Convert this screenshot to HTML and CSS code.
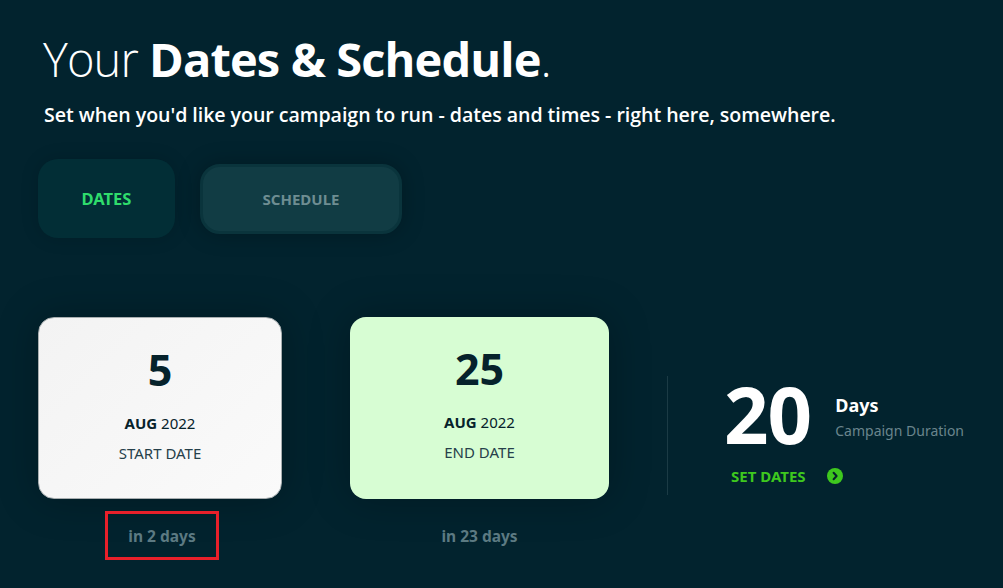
FILE: index.html
```html
<!DOCTYPE html>
<html lang="en">
<head>
  <meta charset="UTF-8" />
  <title>Dates &amp; Schedule</title>
  <link rel="stylesheet" href="styles.css">
</head>
<body>

  <!-- === Header === -->
  <header class="intro">
    <h1><span class="light">Your</span> Dates &amp; Schedule<span class="light">.</span></h1>
    <p>Set when you'd like your campaign to run - dates and times - right here, somewhere.</p>
  </header>

  <!-- === Tabs === -->
  <div class="tabs">
    <button class="tab active">DATES</button>
    <button class="tab">SCHEDULE</button>
  </div>

  <!-- === Date cards === -->
  <section class="dates">
    <div class="date-col">
      <div class="date-card start">
        <div class="day">5</div>
        <div class="month"><b>AUG</b> 2022</div>
        <div class="label">START DATE</div>
      </div>
      <div class="until highlight">in 2 days</div>
    </div>

    <div class="date-col">
      <div class="date-card end">
        <div class="day">25</div>
        <div class="month"><b>AUG</b> 2022</div>
        <div class="label">END DATE</div>
      </div>
      <div class="until">in 23 days</div>
    </div>

    <div class="divider"></div>

    <div class="summary">
      <div class="duration">
        <span class="count">20</span>
        <div class="unit">
          <strong>Days</strong>
          <span>Campaign Duration</span>
        </div>
      </div>
      <a href="#" class="set-dates">SET DATES
        <svg width="16" height="16" viewBox="0 0 16 16">
          <circle cx="8" cy="8" r="8" fill="#3ec81e"/>
          <path d="M6.6 4.8 L9.6 8 L6.6 11.2" fill="none" stroke="#06222b" stroke-width="2" stroke-linecap="round" stroke-linejoin="round"/>
        </svg>
      </a>
    </div>
  </section>

</body>
</html>
```

FILE: styles.css
```css
body {
  background: #02232e;
  color: #fff;
  font-family: 'Open Sans', 'Noto Sans', sans-serif;
  margin: 0;
  padding: 0;
  height: 588px;
  overflow: hidden;
}

/* === Header === */
.intro {
  padding: 25px 0 0 43px;
}

.intro h1 {
  margin: 0;
  font-size: 47px;
  font-weight: 700;
  line-height: 68px;
  letter-spacing: -0.9px;
}

.intro .light {
  font-weight: 300;
}

.intro p {
  margin: 8px 0 0 1px;
  font-size: 19.6px;
  font-weight: 600;
  line-height: 27px;
  letter-spacing: -0.05px;
}

/* === Tabs === */
.tabs {
  display: flex;
  align-items: center;
  gap: 25px;
  padding: 31px 0 0 38px;
}

.tab {
  font-family: 'Noto Sans', sans-serif;
  font-size: 15px;
  font-weight: 700;
  border: none;
  border-radius: 20px;
  cursor: pointer;
}

.tab.active {
  width: 137px;
  height: 79px;
  font-size: 16.5px;
  background: #022e36;
  color: #2fdc6c;
  box-shadow: 0 0 18px rgba(0, 0, 0, 0.15);
}

.tab:not(.active) {
  width: 202px;
  height: 70px;
  background: #113c44;
  color: #6e8d92;
  border: 3px solid #0a343c;
  box-shadow: 0 0 22px rgba(0, 0, 0, 0.25);
}

/* === Date cards === */
.dates {
  display: flex;
  align-items: flex-start;
  padding: 79px 0 0 38px;
  font-family: 'Noto Sans', sans-serif;
}

.date-col {
  display: flex;
  flex-direction: column;
  align-items: center;
}

.date-col + .date-col {
  margin-left: 68px;
}

.date-card {
  height: 182px;
  box-sizing: border-box;
  border-radius: 16px;
  color: #06222b;
  text-align: center;
  padding-top: 24px;
  box-shadow: 0 0 40px rgba(0, 0, 0, 0.25);
}

.date-card.start {
  width: 244px;
  background: linear-gradient(135deg, #f3f3f3, #fafafa);
  border: 1px solid #a8aeb0;
}

.date-card.end {
  width: 259px;
  background: #d7fdd3;
}

.day {
  font-size: 43px;
  font-weight: 700;
  line-height: 56px;
}

.month {
  margin-top: 15px;
  font-size: 15px;
  line-height: 20px;
}

.label {
  margin-top: 10px;
  font-size: 15px;
  line-height: 20px;
  color: #26404a;
}

.until {
  margin-top: 12px;
  font-size: 15.5px;
  font-weight: 700;
  line-height: 20px;
  color: #5c7a82;
  padding: 12px 0 11px;
  width: 108px;
  text-align: center;
  border: 3px solid transparent;
}

.until.highlight {
  margin-left: 4px;
  border-color: #e8202a;
}

.divider {
  width: 1px;
  height: 119px;
  margin: 59px 0 0 58px;
  background: #1b3b45;
}

/* === Summary === */
.summary {
  margin: 62px 0 0 56px;
}

.duration {
  display: flex;
  align-items: flex-start;
  gap: 24px;
}

.count {
  font-size: 78px;
  font-weight: 700;
  line-height: 70px;
  letter-spacing: -1px;
}

.unit {
  display: flex;
  flex-direction: column;
  padding-top: 14px;
}

.unit strong {
  font-size: 18px;
  line-height: 24px;
}

.unit span {
  font-size: 14px;
  line-height: 19px;
  color: #6a858d;
  margin-top: 4px;
}

.set-dates {
  display: flex;
  width: fit-content;
  align-items: center;
  gap: 21px;
  margin: 17px 0 0 7px;
  color: #3ec81e;
  font-size: 15px;
  font-weight: 700;
  line-height: 20px;
  text-decoration: none;
}
```
